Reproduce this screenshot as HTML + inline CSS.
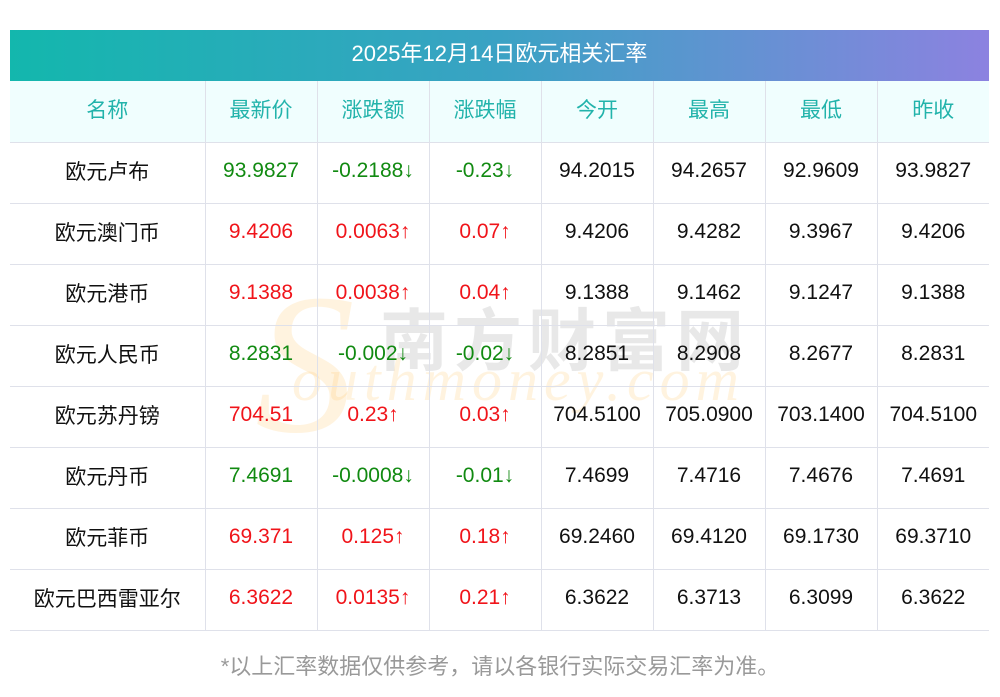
<!DOCTYPE html>
<html><head><meta charset="utf-8"><style>
body{margin:0;background:#fff;width:1000px;height:697px;overflow:hidden;position:relative;font-family:"Liberation Sans","Noto Sans CJK SC",sans-serif;}
.title{position:absolute;left:10px;top:30px;width:979px;height:51px;background:linear-gradient(90deg,#13b7ad,#3aa2c4 50%,#8c82e0);color:#fff;font-size:22px;line-height:47px;text-align:center;}
table{position:absolute;left:10px;top:81px;width:979px;border-collapse:collapse;table-layout:fixed;}
td{height:61px;border:1px solid #dfe1ea;text-align:center;font-size:21px;color:#111;padding:0 0 4px 0;box-sizing:border-box;}
tr td:first-child{border-left:none}tr td:last-child{border-right:none}
tr:first-child td{border-top:none;background:#f0fefe;color:#22b3ab;}
.g{color:#118a11}.r{color:#f0141a}
.foot{position:absolute;top:649px;left:0;width:1000px;text-align:center;color:#999;font-size:22px;}
.wm1{position:absolute;left:380px;top:286px;font-size:68px;color:rgba(150,150,150,.22);letter-spacing:6px;font-weight:bold;}
.wm2{position:absolute;left:292px;top:346px;font-size:60px;color:rgba(253,200,110,.22);font-family:"Liberation Serif",serif;font-style:italic;letter-spacing:6px;}
.wm3{position:absolute;left:255px;top:250px;font-size:200px;color:rgba(253,200,110,.22);font-family:"Liberation Serif",serif;font-style:italic;}
</style></head><body>
<div class="title">2025年12月14日欧元相关汇率</div>
<div class="wm3">S</div>
<div class="wm1">南方财富网</div>
<div class="wm2">outhmoney.com</div>
<table>
<colgroup><col style="width:195px"><col style="width:112px"><col style="width:112px"><col style="width:112px"><col style="width:112px"><col style="width:112px"><col style="width:112px"><col></colgroup>
<tr><td>名称</td><td>最新价</td><td>涨跌额</td><td>涨跌幅</td><td>今开</td><td>最高</td><td>最低</td><td>昨收</td></tr>
<tr><td>欧元卢布</td><td class="g">93.9827</td><td class="g">-0.2188↓</td><td class="g">-0.23↓</td><td>94.2015</td><td>94.2657</td><td>92.9609</td><td>93.9827</td></tr>
<tr><td>欧元澳门币</td><td class="r">9.4206</td><td class="r">0.0063↑</td><td class="r">0.07↑</td><td>9.4206</td><td>9.4282</td><td>9.3967</td><td>9.4206</td></tr>
<tr><td>欧元港币</td><td class="r">9.1388</td><td class="r">0.0038↑</td><td class="r">0.04↑</td><td>9.1388</td><td>9.1462</td><td>9.1247</td><td>9.1388</td></tr>
<tr><td>欧元人民币</td><td class="g">8.2831</td><td class="g">-0.002↓</td><td class="g">-0.02↓</td><td>8.2851</td><td>8.2908</td><td>8.2677</td><td>8.2831</td></tr>
<tr><td>欧元苏丹镑</td><td class="r">704.51</td><td class="r">0.23↑</td><td class="r">0.03↑</td><td>704.5100</td><td>705.0900</td><td>703.1400</td><td>704.5100</td></tr>
<tr><td>欧元丹币</td><td class="g">7.4691</td><td class="g">-0.0008↓</td><td class="g">-0.01↓</td><td>7.4699</td><td>7.4716</td><td>7.4676</td><td>7.4691</td></tr>
<tr><td>欧元菲币</td><td class="r">69.371</td><td class="r">0.125↑</td><td class="r">0.18↑</td><td>69.2460</td><td>69.4120</td><td>69.1730</td><td>69.3710</td></tr>
<tr><td>欧元巴西雷亚尔</td><td class="r">6.3622</td><td class="r">0.0135↑</td><td class="r">0.21↑</td><td>6.3622</td><td>6.3713</td><td>6.3099</td><td>6.3622</td></tr>
</table>
<div class="foot">*以上汇率数据仅供参考，请以各银行实际交易汇率为准。</div>
</body></html>
